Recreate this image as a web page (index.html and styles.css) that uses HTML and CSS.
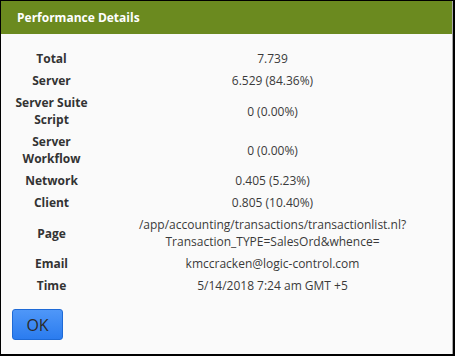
FILE: index.html
```html
<!DOCTYPE html>
<html>
<head>
  <title>Performance Details</title>
  <link rel="stylesheet" href="styles.css">
</head>
<body>
  <div class="dialog">
    <div class="dialog-header">Performance Details</div>

    <div class="dialog-body">
      <table class="details">
        <tr>
          <th>Total</th>
          <td>7.739</td>
        </tr>
        <tr>
          <th>Server</th>
          <td>6.529 (84.36%)</td>
        </tr>
        <tr>
          <th>Server Suite<br>Script</th>
          <td>0 (0.00%)</td>
        </tr>
        <tr>
          <th>Server<br>Workflow</th>
          <td>0 (0.00%)</td>
        </tr>
        <tr>
          <th>Network</th>
          <td>0.405 (5.23%)</td>
        </tr>
        <tr>
          <th>Client</th>
          <td>0.805 (10.40%)</td>
        </tr>
        <tr>
          <th>Page</th>
          <td>/app/accounting/transactions/transactionlist.nl?<br>Transaction_TYPE=SalesOrd&amp;whence=</td>
        </tr>
        <tr>
          <th>Email</th>
          <td>kmccracken@logic-control.com</td>
        </tr>
        <tr>
          <th>Time</th>
          <td>5/14/2018 7:24 am GMT +5</td>
        </tr>
      </table>

      <div class="actions">
        <button class="btn-ok">OK</button>
      </div>
    </div>
  </div>
</body>
</html>
```

FILE: styles.css
```css
body {
  margin: 0;
  padding: 0;
  font-family: 'Open Sans', 'Noto Sans', sans-serif;
  background-color: #000;
}

.dialog {
  box-sizing: border-box;
  height: 356px;
  border-style: solid;
  border-color: #000;
  border-width: 1px 2px 2px 1px;
  background-color: #fafafa;
  box-shadow: inset -1px 0 0 #a8a8a8;
}

.dialog-header {
  height: 33px;
  padding-left: 16px;
  background-color: #6b8a1f;
  color: #fff;
  font-size: 12px;
  font-weight: bold;
  line-height: 33px;
  margin-right: 1px;
}

.dialog-body {
  padding: 13px 10px 0 0;
}

.details {
  width: 100%;
  border-collapse: collapse;
  font-size: 12px;
  line-height: 17px;
  color: #333;
}

.details th,
.details td {
  padding: 3px 0 2px;
  text-align: center;
  vertical-align: middle;
}

.details th {
  width: 101px;
  font-weight: bold;
  color: #333;
}

.details td {
  color: #3a3a3a;
}

.actions {
  padding: 13px 0 0 11px;
}

.btn-ok {
  width: 51px;
  height: 31px;
  padding: 0;
  border: 1px solid #1e6ad6;
  border-radius: 3px;
  background: linear-gradient(#4f97f8, #2b7cef);
  color: #2a2a2a;
  font-family: 'Open Sans', sans-serif;
  font-size: 16px;
  cursor: pointer;
}
```
